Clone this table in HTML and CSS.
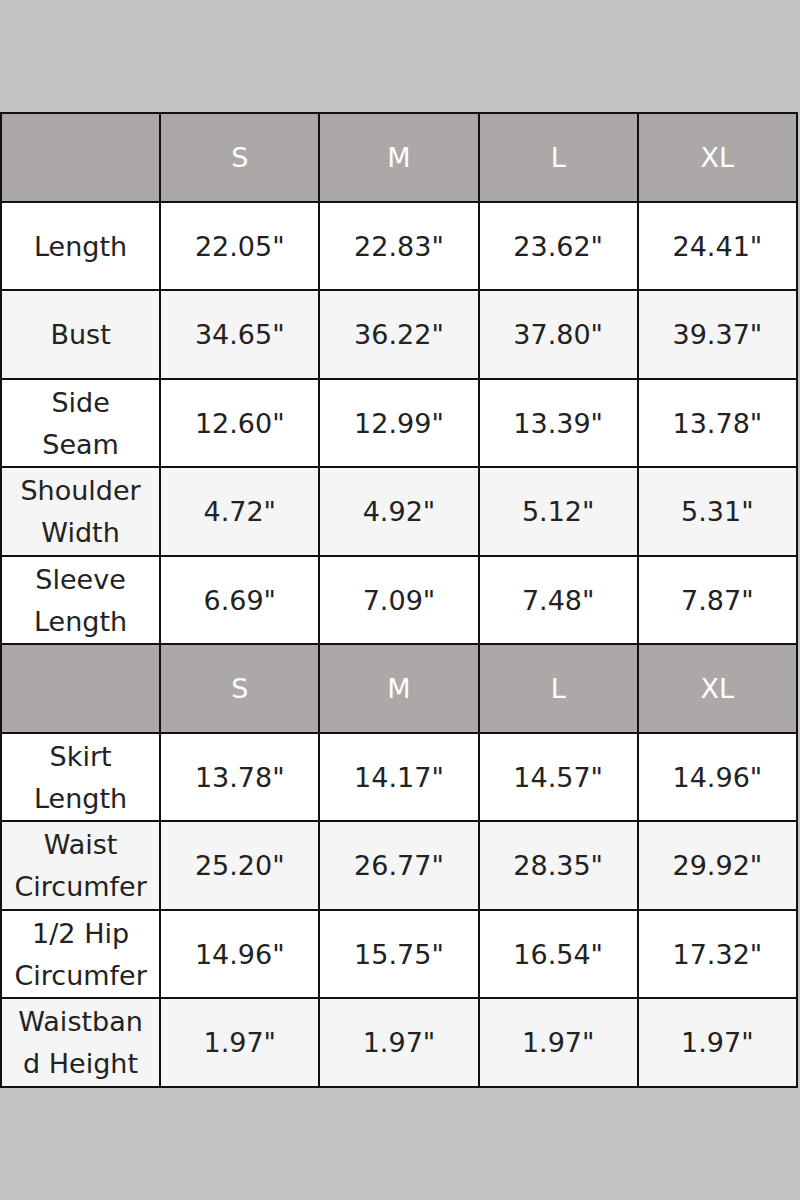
FILE: index.html
```html
<!DOCTYPE html>
<html>
<head>
<meta charset="utf-8">
<link rel="stylesheet" href="styles.css">
</head>
<body>
<div class="page">
<table class="chart">
  <tr class="head"><td></td><td>S</td><td>M</td><td>L</td><td>XL</td></tr>
  <tr><td>Length</td><td>22.05"</td><td>22.83"</td><td>23.62"</td><td>24.41"</td></tr>
  <tr class="alt"><td>Bust</td><td>34.65"</td><td>36.22"</td><td>37.80"</td><td>39.37"</td></tr>
  <tr><td>Side<br>Seam</td><td>12.60"</td><td>12.99"</td><td>13.39"</td><td>13.78"</td></tr>
  <tr class="alt"><td>Shoulder<br>Width</td><td>4.72"</td><td>4.92"</td><td>5.12"</td><td>5.31"</td></tr>
  <tr><td>Sleeve<br>Length</td><td>6.69"</td><td>7.09"</td><td>7.48"</td><td>7.87"</td></tr>
  <tr class="head"><td></td><td>S</td><td>M</td><td>L</td><td>XL</td></tr>
  <tr><td>Skirt<br>Length</td><td>13.78"</td><td>14.17"</td><td>14.57"</td><td>14.96"</td></tr>
  <tr class="alt"><td>Waist<br>Circumfer</td><td>25.20"</td><td>26.77"</td><td>28.35"</td><td>29.92"</td></tr>
  <tr><td>1/2 Hip<br>Circumfer</td><td>14.96"</td><td>15.75"</td><td>16.54"</td><td>17.32"</td></tr>
  <tr class="alt"><td>Waistban<br>d Height</td><td>1.97"</td><td>1.97"</td><td>1.97"</td><td>1.97"</td></tr>
</table>
</div>
</body>
</html>
```
FILE: styles.css
```css
html, body {
  margin: 0;
  padding: 0;
  background: #c3c3c3;
}
.page {
  width: 800px;
  height: 1200px;
  padding-top: 112px;
  box-sizing: border-box;
}
.chart {
  width: 798px;
  border-collapse: collapse;
  table-layout: fixed;
  font-family: "DejaVu Sans", sans-serif;
  font-size: 27px;
  color: #222;
  background: #fff;
}
.chart td {
  border: 2px solid #111;
  height: 84.5px;
  padding: 2px 0 0;
  text-align: center;
  vertical-align: middle;
  line-height: 42px;
  overflow: hidden;
  white-space: nowrap;
}
.chart tr.alt td {
  background: #f5f5f5;
}
.chart tr.head td {
  background: #aca8a7;
  color: #fff;
}
```
